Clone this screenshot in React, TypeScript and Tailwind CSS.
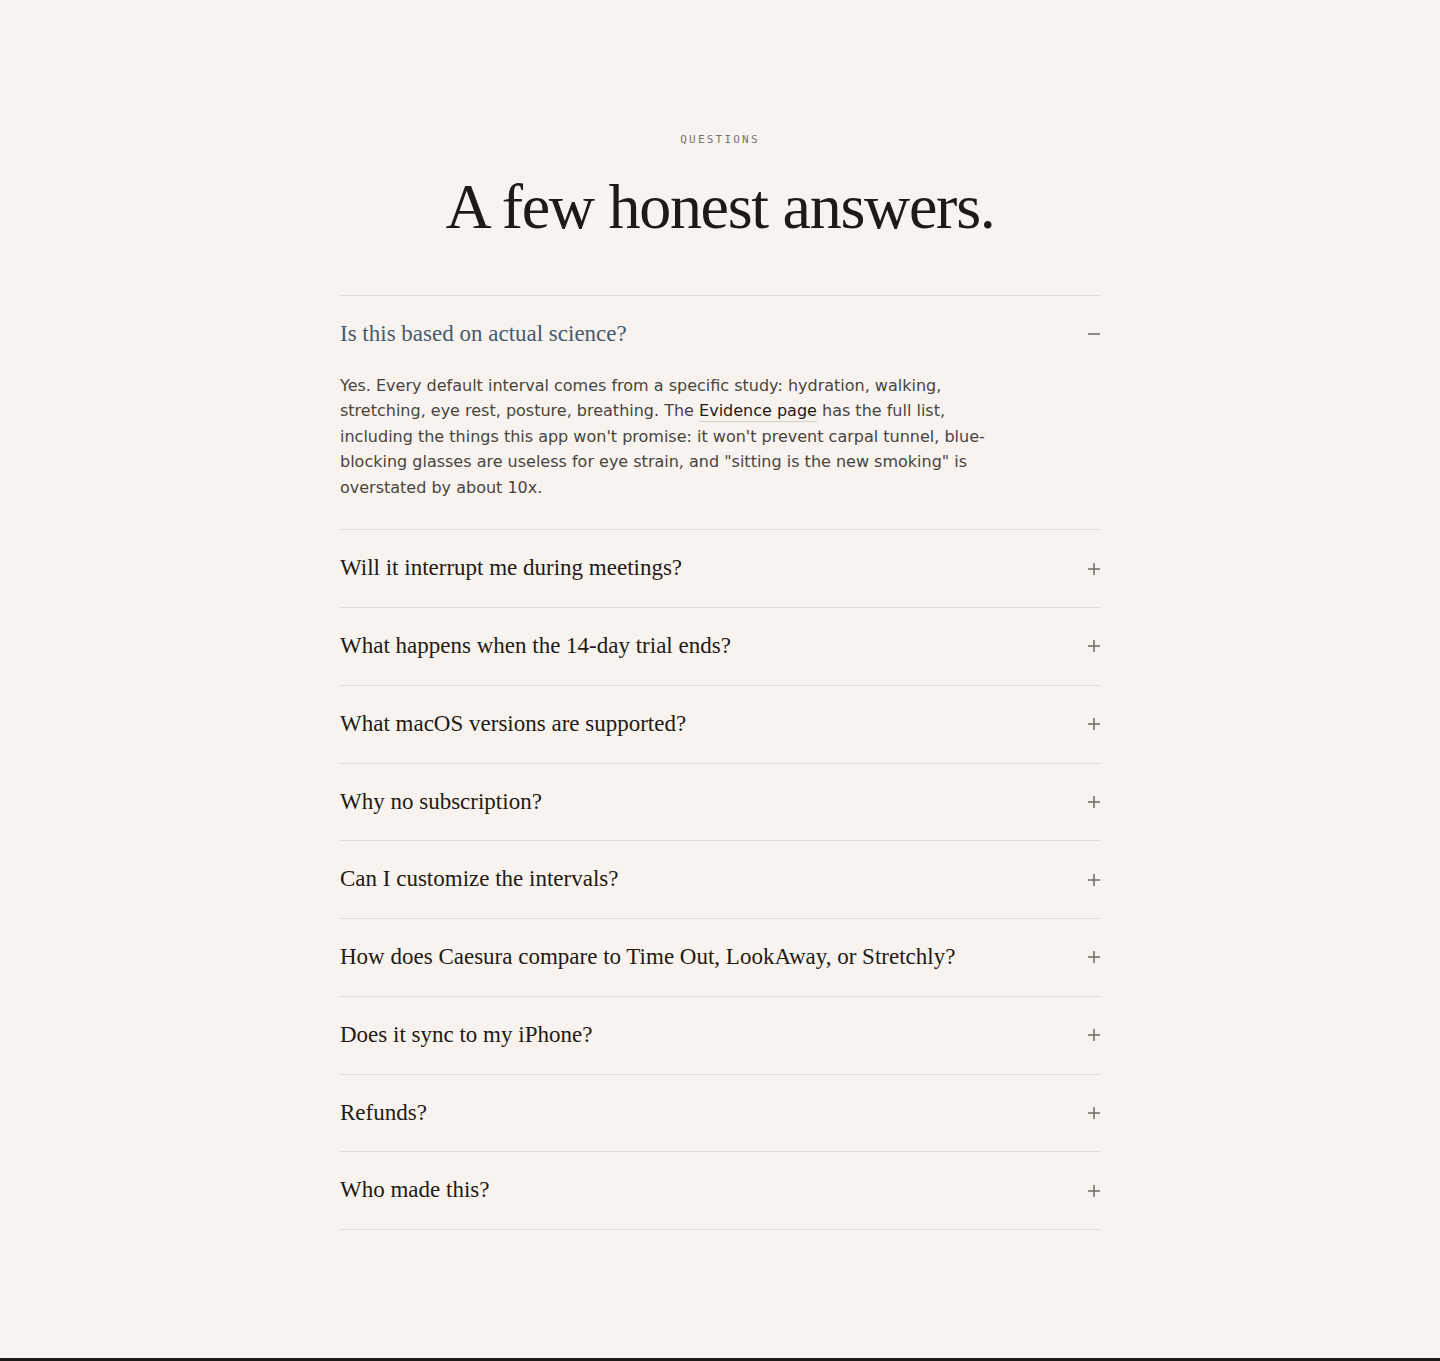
import { useState } from 'react'

interface Faq {
  q: string
  a?: React.ReactNode
}

const FAQS: Faq[] = [
  {
    q: 'Is this based on actual science?',
    a: (
      <>
        Yes. Every default interval comes from a specific study: hydration, walking, stretching, eye rest,
        posture, breathing. The{' '}
        <a href="#" className="text-[#1f1a15] underline decoration-[#d6cfc6] decoration-1 underline-offset-[5px]">
          Evidence page
        </a>{' '}
        has the full list, including the things this app won't promise: it won't prevent carpal tunnel,
        blue-blocking glasses are useless for eye strain, and "sitting is the new smoking" is overstated by
        about 10x.
      </>
    ),
  },
  { q: 'Will it interrupt me during meetings?' },
  { q: 'What happens when the 14-day trial ends?' },
  { q: 'What macOS versions are supported?' },
  { q: 'Why no subscription?' },
  { q: 'Can I customize the intervals?' },
  { q: 'How does Caesura compare to Time Out, LookAway, or Stretchly?' },
  { q: 'Does it sync to my iPhone?' },
  { q: 'Refunds?' },
  { q: 'Who made this?' },
]

function Toggle({ open }: { open: boolean }) {
  return (
    <svg width="12" height="12" viewBox="0 0 12 12" className="shrink-0 text-[#6e6862]">
      <path d="M0 6h12" stroke="currentColor" strokeWidth="1.5" />
      {!open && <path d="M6 0v12" stroke="currentColor" strokeWidth="1.5" />}
    </svg>
  )
}

export default function App() {
  const [open, setOpen] = useState<number | null>(0)

  return (
    <div className="min-h-[1361px] bg-[#f8f3ee] flex flex-col">
      <section className="flex-1 pt-[130px] pb-[128px] px-6">
        <div className="max-w-[760px] mx-auto">
          <p className="text-center text-[11px] leading-[20px] tracking-[0.2em] text-[#7a746e] font-['DejaVu_Sans_Mono',monospace]">
            QUESTIONS
          </p>
          <h2 className="mt-[19px] text-center text-[64px] leading-[76px] tracking-[-0.02em] text-[#1f1a15] font-['Liberation_Serif',serif]">
            A few honest answers.
          </h2>

          <div className="mt-[50px] border-t border-[#e2ddd6]">
            {FAQS.map((f, i) => {
              const isOpen = open === i
              return (
                <div key={f.q} className="border-b border-[#e2ddd6]">
                  <button
                    onClick={() => setOpen(isOpen ? null : i)}
                    className="w-full flex items-center justify-between gap-6 py-6 text-left cursor-pointer"
                  >
                    <span
                      className={`text-[23px] leading-[28.75px] font-['Liberation_Serif',serif] ${
                        isOpen ? 'text-[#485a6d]' : 'text-[#1f1a15]'
                      }`}
                    >
                      {f.q}
                    </span>
                    <Toggle open={isOpen} />
                  </button>
                  {isOpen && f.a && (
                    <p className="max-w-[660px] pb-[29px] text-[16px] leading-[25.5px] text-[#4a443e] font-['DejaVu_Sans',sans-serif]">
                      {f.a}
                    </p>
                  )}
                </div>
              )
            })}
          </div>
        </div>
      </section>
      <footer className="h-[3px] bg-[#1f1a15]" />
    </div>
  )
}
